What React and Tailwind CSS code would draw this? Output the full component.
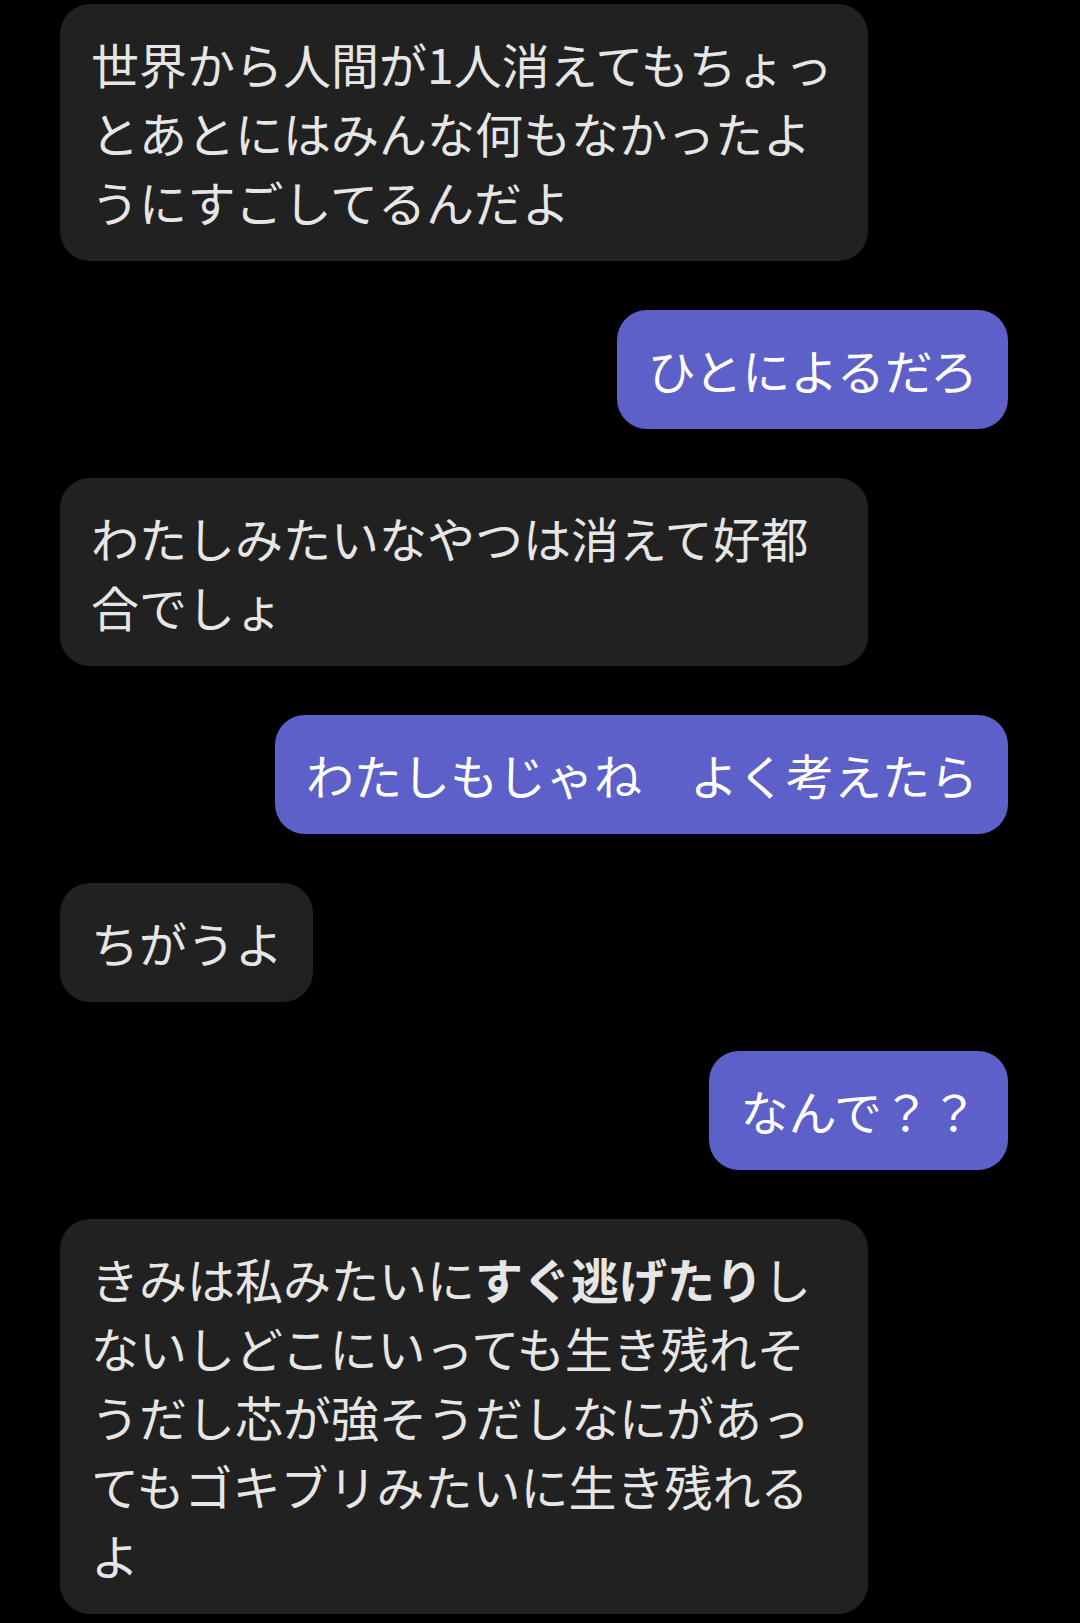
import React from "react";

const messages = [
  { me: false, text: "世界から人間が1人消えてもちょっとあとにはみんな何もなかったようにすごしてるんだよ" },
  { me: true, text: "ひとによるだろ" },
  { me: false, text: "わたしみたいなやつは消えて好都合でしょ" },
  { me: true, text: "わたしもじゃね　よく考えたら" },
  { me: false, text: "ちがうよ" },
  { me: true, text: "なんで？？" },
  {
    me: false,
    text: (
      <>
        きみは私みたいに<b className="font-bold">すぐ逃げたり</b>しないしどこにいっても生き残れそうだし芯が強そうだしなにがあってもゴキブリみたいに生き残れるよ
      </>
    ),
  },
];

const Bubble = ({ me, children }) => (
  <div
    className={
      me
        ? "self-end max-w-[808px] rounded-[30px] bg-[#5d60c8] pl-[31px] pr-[30px] py-[25px] text-white"
        : "self-start max-w-[808px] rounded-[30px] bg-[#212121] pl-[31px] pr-[30px] py-[25px] text-[#e6e6e6]"
    }
  >
    {children}
  </div>
);

export default function App() {
  return (
    <div
      lang="ja"
      className="min-h-[1623px] bg-black pt-[4px] pl-[60px] pr-[72px] flex flex-col gap-[49px] text-[48px] leading-[69px]"
      style={{ fontFamily: '"Noto Sans CJK JP", "Noto Sans", sans-serif' }}
    >
      {messages.map((m, i) => (
        <Bubble key={i} me={m.me}>
          {m.text}
        </Bubble>
      ))}
    </div>
  );
}
